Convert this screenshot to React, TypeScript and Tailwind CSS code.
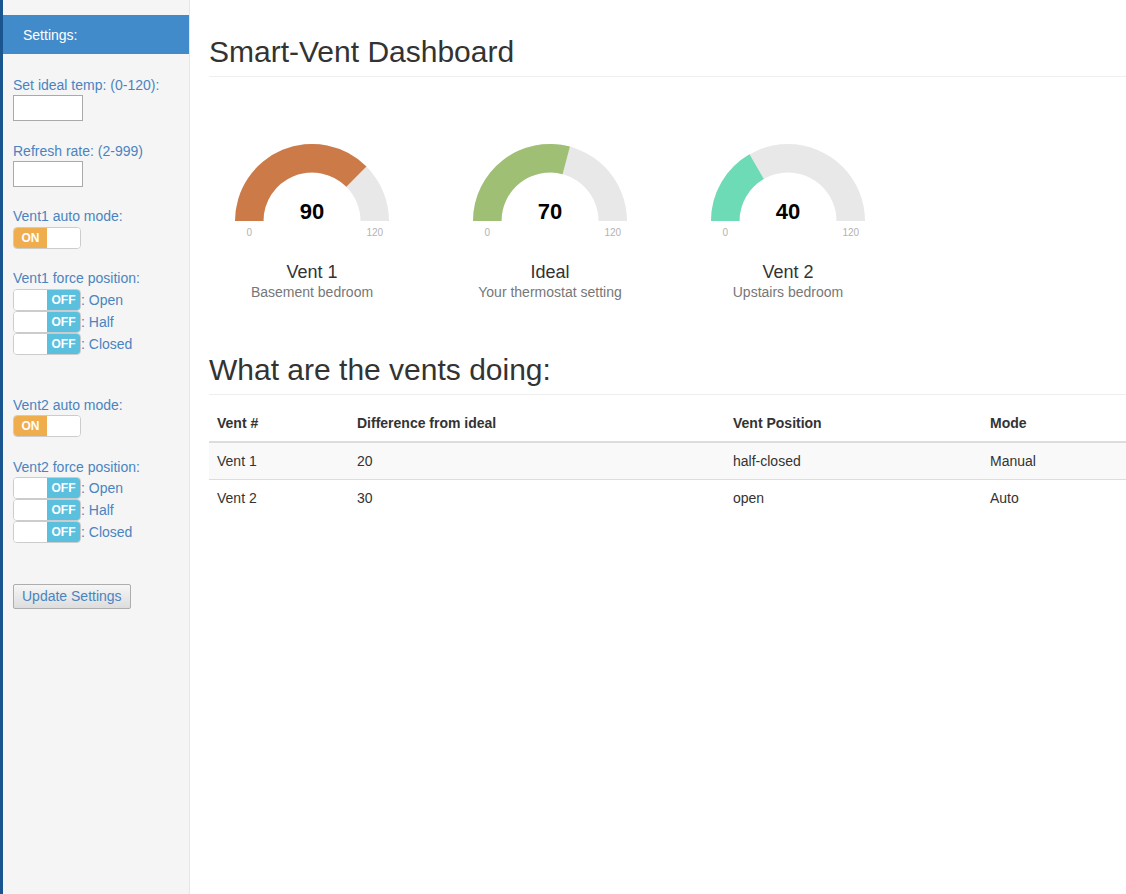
import React from "react";

const FONT = { fontFamily: '"Liberation Sans", Arial, sans-serif' };

function Gauge({ value, color, title, sub }: { value: number; color: string; title: string; sub: string }) {
  const cx = 103, cy = 87, R = 77, r = 48.5;
  const f = value / 120;
  const th = Math.PI * (1 - f);
  const ox = cx + R * Math.cos(th), oy = cy - R * Math.sin(th);
  const ix = cx + r * Math.cos(th), iy = cy - r * Math.sin(th);
  const bg = `M ${cx - R} ${cy} A ${R} ${R} 0 0 1 ${cx + R} ${cy} L ${cx + r} ${cy} A ${r} ${r} 0 0 0 ${cx - r} ${cy} Z`;
  const fg = `M ${cx - R} ${cy} A ${R} ${R} 0 0 1 ${ox} ${oy} L ${ix} ${iy} A ${r} ${r} 0 0 0 ${cx - r} ${cy} Z`;
  return (
    <div className="w-[206px] flex flex-col items-center">
      <svg width="206" height="105" viewBox="0 0 206 105">
        <path d={bg} fill="#e8e8e8" />
        <path d={fg} fill={color} />
        <text x={cx} y={77} textAnchor="middle" dominantBaseline="central" fontSize="22" fontWeight="bold" fill="#010101" style={FONT}>
          {value}
        </text>
        <text x={cx - (R + r) / 2} y={98} textAnchor="middle" dominantBaseline="central" fontSize="10" fill="#b3b3b3" style={FONT}>
          0
        </text>
        <text x={cx + (R + r) / 2} y={98} textAnchor="middle" dominantBaseline="central" fontSize="10" fill="#b3b3b3" style={FONT}>
          120
        </text>
      </svg>
      <div className="mt-[23px] text-[18px] leading-[20px] text-[#333]">{title}</div>
      <div className="text-[14px] leading-[20px] text-[#777]">{sub}</div>
    </div>
  );
}

function OnSwitch() {
  return (
    <div className="w-[68px] h-[22px] rounded-[4px] border border-[#ccc] overflow-hidden flex bg-white">
      <div className="w-[33px] h-full bg-[#f0ad4e] text-white text-[12px] font-bold flex items-center justify-center">ON</div>
      <div className="flex-1 bg-white" />
    </div>
  );
}

function OffSwitch({ label }: { label: string }) {
  return (
    <div className="flex items-center h-[22px]">
      <div className="w-[68px] h-[22px] rounded-[4px] border border-[#ccc] overflow-hidden flex bg-white">
        <div className="w-[33px] h-full bg-white" />
        <div className="flex-1 h-full bg-[#5bc0de] text-white text-[12px] font-bold flex items-center justify-center">OFF</div>
      </div>
      <span className="text-[14px] leading-[20px] text-[#4a84c0]">: {label}</span>
    </div>
  );
}

export default function App() {
  const label = "text-[14px] leading-[20px] text-[#4a84c0]";
  return (
    <div className="flex min-h-screen bg-white" style={FONT}>
      <div className="w-[3px] bg-[#1a5590] shrink-0" />
      <aside className="w-[187px] shrink-0 bg-[#f5f5f5] border-r border-[#e6e6e6] flex flex-col">
        <div className="mt-[15px] h-[39px] bg-[#428bca] text-white text-[14px] flex items-center pl-[20px] pt-[1px]">Settings:</div>
        <div className="pl-[10px] flex flex-col">
          <div className={`${label} mt-[21px]`}>Set ideal temp: (0-120):</div>
          <div className="w-[70px] h-[26px] bg-white border border-[#aaa]" />
          <div className={`${label} mt-[20px]`}>Refresh rate: (2-999)</div>
          <div className="w-[70px] h-[26px] bg-white border border-[#aaa]" />
          <div className={`${label} mt-[19px]`}>Vent1 auto mode:</div>
          <div className="mt-[1px]">
            <OnSwitch />
          </div>
          <div className={`${label} mt-[19px]`}>Vent1 force position:</div>
          <div className="mt-[1px] flex flex-col">
            <OffSwitch label="Open" />
            <OffSwitch label="Half" />
            <OffSwitch label="Closed" />
          </div>
          <div className={`${label} mt-[40px]`}>Vent2 auto mode:</div>
          <div>
            <OnSwitch />
          </div>
          <div className={`${label} mt-[20px]`}>Vent2 force position:</div>
          <div className="flex flex-col">
            <OffSwitch label="Open" />
            <OffSwitch label="Half" />
            <OffSwitch label="Closed" />
          </div>
          <div className="mt-[41px]">
            <button className="h-[25px] px-[8px] text-[14px] text-[#4a84c0] border border-[#adadad] rounded-[2px] bg-gradient-to-b from-[#f6f6f6] to-[#dddddd]">
              Update Settings
            </button>
          </div>
        </div>
      </aside>
      <main className="flex-1 pl-[19px] pt-[35px]">
        <h1 className="text-[30px] leading-[33px] text-[#333] pb-[8px] border-b border-[#eee]">Smart-Vent Dashboard</h1>
        <div className="mt-[57px] flex gap-[32px]">
          <Gauge value={90} color="#cc7a47" title="Vent 1" sub="Basement bedroom" />
          <Gauge value={70} color="#9fbf74" title="Ideal" sub="Your thermostat setting" />
          <Gauge value={40} color="#6ddbb5" title="Vent 2" sub="Upstairs bedroom" />
        </div>
        <h2 className="mt-[51px] text-[30px] leading-[33px] text-[#333] pb-[8px] border-b border-[#eee]">What are the vents doing:</h2>
        <table className="mt-[10px] w-full border-collapse text-[14px] text-[#333]">
          <thead>
            <tr className="border-b-2 border-[#ddd]">
              <th className="w-[140px] text-left font-bold px-[8px] py-[8px] leading-[20px]">Vent #</th>
              <th className="w-[376px] text-left font-bold px-[8px] py-[8px] leading-[20px]">Difference from ideal</th>
              <th className="w-[257px] text-left font-bold px-[8px] py-[8px] leading-[20px]">Vent Position</th>
              <th className="text-left font-bold px-[8px] py-[8px] leading-[20px]">Mode</th>
            </tr>
          </thead>
          <tbody>
            <tr className="bg-[#f9f9f9]">
              <td className="px-[8px] py-[8px] leading-[20px]">Vent 1</td>
              <td className="px-[8px] py-[8px] leading-[20px]">20</td>
              <td className="px-[8px] py-[8px] leading-[20px]">half-closed</td>
              <td className="px-[8px] py-[8px] leading-[20px]">Manual</td>
            </tr>
            <tr className="border-t border-[#ddd]">
              <td className="px-[8px] py-[8px] leading-[20px]">Vent 2</td>
              <td className="px-[8px] py-[8px] leading-[20px]">30</td>
              <td className="px-[8px] py-[8px] leading-[20px]">open</td>
              <td className="px-[8px] py-[8px] leading-[20px]">Auto</td>
            </tr>
          </tbody>
        </table>
      </main>
    </div>
  );
}
